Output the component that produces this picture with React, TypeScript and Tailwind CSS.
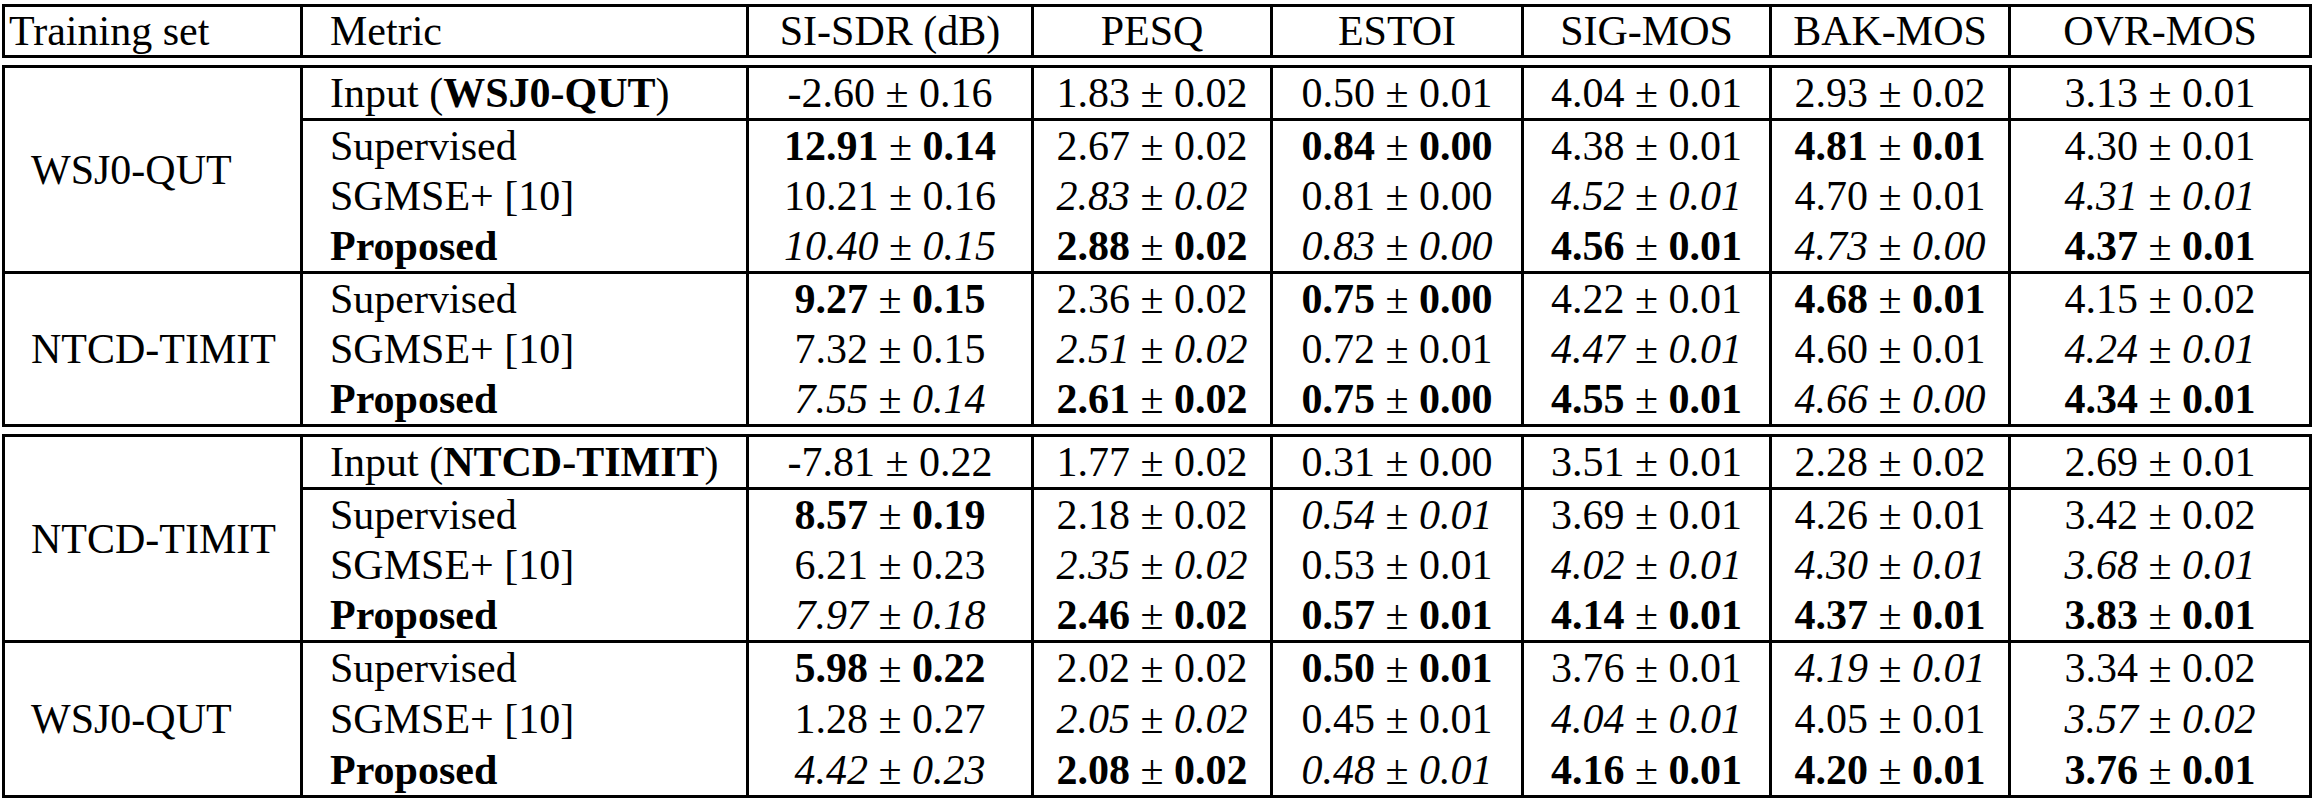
import React from 'react';

type S = 'n' | 'b' | 'i';
type Cell = [string, string, S];
type Row = { metric: React.ReactNode; cells: Cell[] };
type Group = { train?: string; rows: Row[]; tall?: boolean };

const COLS = ['w-[298px]', 'w-[446px]', 'w-[285px]', 'w-[239px]', 'w-[251px]', 'w-[248px]', 'w-[239px]', 'w-[301px]'];

function Val({ c }: { c: Cell }) {
  const [v, e, s] = c;
  const cls = s === 'b' ? 'font-bold' : s === 'i' ? 'italic' : '';
  return (
    <span className="whitespace-nowrap">
      <span className={cls}>{v}</span> ± <span className={cls}>{e}</span>
    </span>
  );
}

const sup = <>Supervised</>;
const sg = <>SGMSE+ [10]</>;
const prop = <span className="font-bold">Proposed</span>;

const block1: Group[] = [
  {
    train: 'WSJ0-QUT',
    rows: [
      {
        metric: (
          <>
            Input (<span className="font-bold">WSJ0-QUT</span>)
          </>
        ),
        cells: [
          ['-2.60', '0.16', 'n'],
          ['1.83', '0.02', 'n'],
          ['0.50', '0.01', 'n'],
          ['4.04', '0.01', 'n'],
          ['2.93', '0.02', 'n'],
          ['3.13', '0.01', 'n'],
        ],
      },
      {
        metric: sup,
        cells: [
          ['12.91', '0.14', 'b'],
          ['2.67', '0.02', 'n'],
          ['0.84', '0.00', 'b'],
          ['4.38', '0.01', 'n'],
          ['4.81', '0.01', 'b'],
          ['4.30', '0.01', 'n'],
        ],
      },
      {
        metric: sg,
        cells: [
          ['10.21', '0.16', 'n'],
          ['2.83', '0.02', 'i'],
          ['0.81', '0.00', 'n'],
          ['4.52', '0.01', 'i'],
          ['4.70', '0.01', 'n'],
          ['4.31', '0.01', 'i'],
        ],
      },
      {
        metric: prop,
        cells: [
          ['10.40', '0.15', 'i'],
          ['2.88', '0.02', 'b'],
          ['0.83', '0.00', 'i'],
          ['4.56', '0.01', 'b'],
          ['4.73', '0.00', 'i'],
          ['4.37', '0.01', 'b'],
        ],
      },
    ],
  },
  {
    train: 'NTCD-TIMIT',
    rows: [
      {
        metric: sup,
        cells: [
          ['9.27', '0.15', 'b'],
          ['2.36', '0.02', 'n'],
          ['0.75', '0.00', 'b'],
          ['4.22', '0.01', 'n'],
          ['4.68', '0.01', 'b'],
          ['4.15', '0.02', 'n'],
        ],
      },
      {
        metric: sg,
        cells: [
          ['7.32', '0.15', 'n'],
          ['2.51', '0.02', 'i'],
          ['0.72', '0.01', 'n'],
          ['4.47', '0.01', 'i'],
          ['4.60', '0.01', 'n'],
          ['4.24', '0.01', 'i'],
        ],
      },
      {
        metric: prop,
        cells: [
          ['7.55', '0.14', 'i'],
          ['2.61', '0.02', 'b'],
          ['0.75', '0.00', 'b'],
          ['4.55', '0.01', 'b'],
          ['4.66', '0.00', 'i'],
          ['4.34', '0.01', 'b'],
        ],
      },
    ],
  },
];

const block2: Group[] = [
  {
    train: 'NTCD-TIMIT',
    rows: [
      {
        metric: (
          <>
            Input (<span className="font-bold">NTCD-TIMIT</span>)
          </>
        ),
        cells: [
          ['-7.81', '0.22', 'n'],
          ['1.77', '0.02', 'n'],
          ['0.31', '0.00', 'n'],
          ['3.51', '0.01', 'n'],
          ['2.28', '0.02', 'n'],
          ['2.69', '0.01', 'n'],
        ],
      },
      {
        metric: sup,
        cells: [
          ['8.57', '0.19', 'b'],
          ['2.18', '0.02', 'n'],
          ['0.54', '0.01', 'i'],
          ['3.69', '0.01', 'n'],
          ['4.26', '0.01', 'n'],
          ['3.42', '0.02', 'n'],
        ],
      },
      {
        metric: sg,
        cells: [
          ['6.21', '0.23', 'n'],
          ['2.35', '0.02', 'i'],
          ['0.53', '0.01', 'n'],
          ['4.02', '0.01', 'i'],
          ['4.30', '0.01', 'i'],
          ['3.68', '0.01', 'i'],
        ],
      },
      {
        metric: prop,
        cells: [
          ['7.97', '0.18', 'i'],
          ['2.46', '0.02', 'b'],
          ['0.57', '0.01', 'b'],
          ['4.14', '0.01', 'b'],
          ['4.37', '0.01', 'b'],
          ['3.83', '0.01', 'b'],
        ],
      },
    ],
  },
  {
    train: 'WSJ0-QUT',
    tall: true,
    rows: [
      {
        metric: sup,
        cells: [
          ['5.98', '0.22', 'b'],
          ['2.02', '0.02', 'n'],
          ['0.50', '0.01', 'b'],
          ['3.76', '0.01', 'n'],
          ['4.19', '0.01', 'i'],
          ['3.34', '0.02', 'n'],
        ],
      },
      {
        metric: sg,
        cells: [
          ['1.28', '0.27', 'n'],
          ['2.05', '0.02', 'i'],
          ['0.45', '0.01', 'n'],
          ['4.04', '0.01', 'i'],
          ['4.05', '0.01', 'n'],
          ['3.57', '0.02', 'i'],
        ],
      },
      {
        metric: prop,
        cells: [
          ['4.42', '0.23', 'i'],
          ['2.08', '0.02', 'b'],
          ['0.48', '0.01', 'i'],
          ['4.16', '0.01', 'b'],
          ['4.20', '0.01', 'b'],
          ['3.76', '0.01', 'b'],
        ],
      },
    ],
  },
];

function ColGroup() {
  return (
    <colgroup>
      {COLS.map((c, i) => (
        <col key={i} className={c} />
      ))}
    </colgroup>
  );
}

function Block({ groups }: { groups: Group[] }) {
  return (
    <table className="table-fixed border-collapse border-[3px] border-black w-[2307px]">
      <ColGroup />
      <tbody>
        {groups.map((g, gi) => {
          const hasInput = gi === 0;
          return g.rows.map((r, ri) => {
            const isInput = hasInput && ri === 0;
            const firstOfGroup = ri === 0;
            const afterInput = hasInput && ri === 1;
            const trCls = isInput ? 'h-[53px]' : g.tall ? 'h-[51.5px]' : 'h-[51px]';
            return (
              <tr key={gi + '-' + ri} className={trCls}>
                {firstOfGroup && (
                  <td
                    rowSpan={g.rows.length}
                    className="border-[3px] border-black pl-[26px] text-left align-middle"
                  >
                    {g.train}
                  </td>
                )}
                <td
                  className={
                    'border-x-[3px] border-black pl-[27px] text-left whitespace-nowrap ' +
                    (firstOfGroup ? 'border-t-[3px] ' : '') +
                    (afterInput ? 'border-t-[3px] ' : '')
                  }
                >
                  {r.metric}
                </td>
                {r.cells.map((c, ci) => (
                  <td
                    key={ci}
                    className={
                      'border-x-[3px] border-black text-center ' +
                      (firstOfGroup ? 'border-t-[3px] ' : '') +
                      (afterInput ? 'border-t-[3px] ' : '')
                    }
                  >
                    <Val c={c} />
                  </td>
                ))}
              </tr>
            );
          });
        })}
      </tbody>
    </table>
  );
}

export default function App() {
  const heads = ['SI-SDR (dB)', 'PESQ', 'ESTOI', 'SIG-MOS', 'BAK-MOS', 'OVR-MOS'];
  return (
    <div className="bg-white w-[2314px] h-[802px] pl-[2px] pt-[4px] text-black font-['Liberation_Serif','Times_New_Roman',serif] text-[42px] leading-[44px]">
      <table className="table-fixed border-collapse border-[3px] border-black w-[2307px]">
        <ColGroup />
        <tbody>
          <tr className="h-[51px]">
            <td className="border-[3px] border-black pl-[4px] text-left whitespace-nowrap">Training set</td>
            <td className="border-[3px] border-black pl-[27px] text-left">Metric</td>
            {heads.map((h) => (
              <td key={h} className="border-[3px] border-black text-center whitespace-nowrap">
                {h}
              </td>
            ))}
          </tr>
        </tbody>
      </table>
      <div className="mt-[7px]">
        <Block groups={block1} />
      </div>
      <div className="mt-[7px]">
        <Block groups={block2} />
      </div>
    </div>
  );
}
